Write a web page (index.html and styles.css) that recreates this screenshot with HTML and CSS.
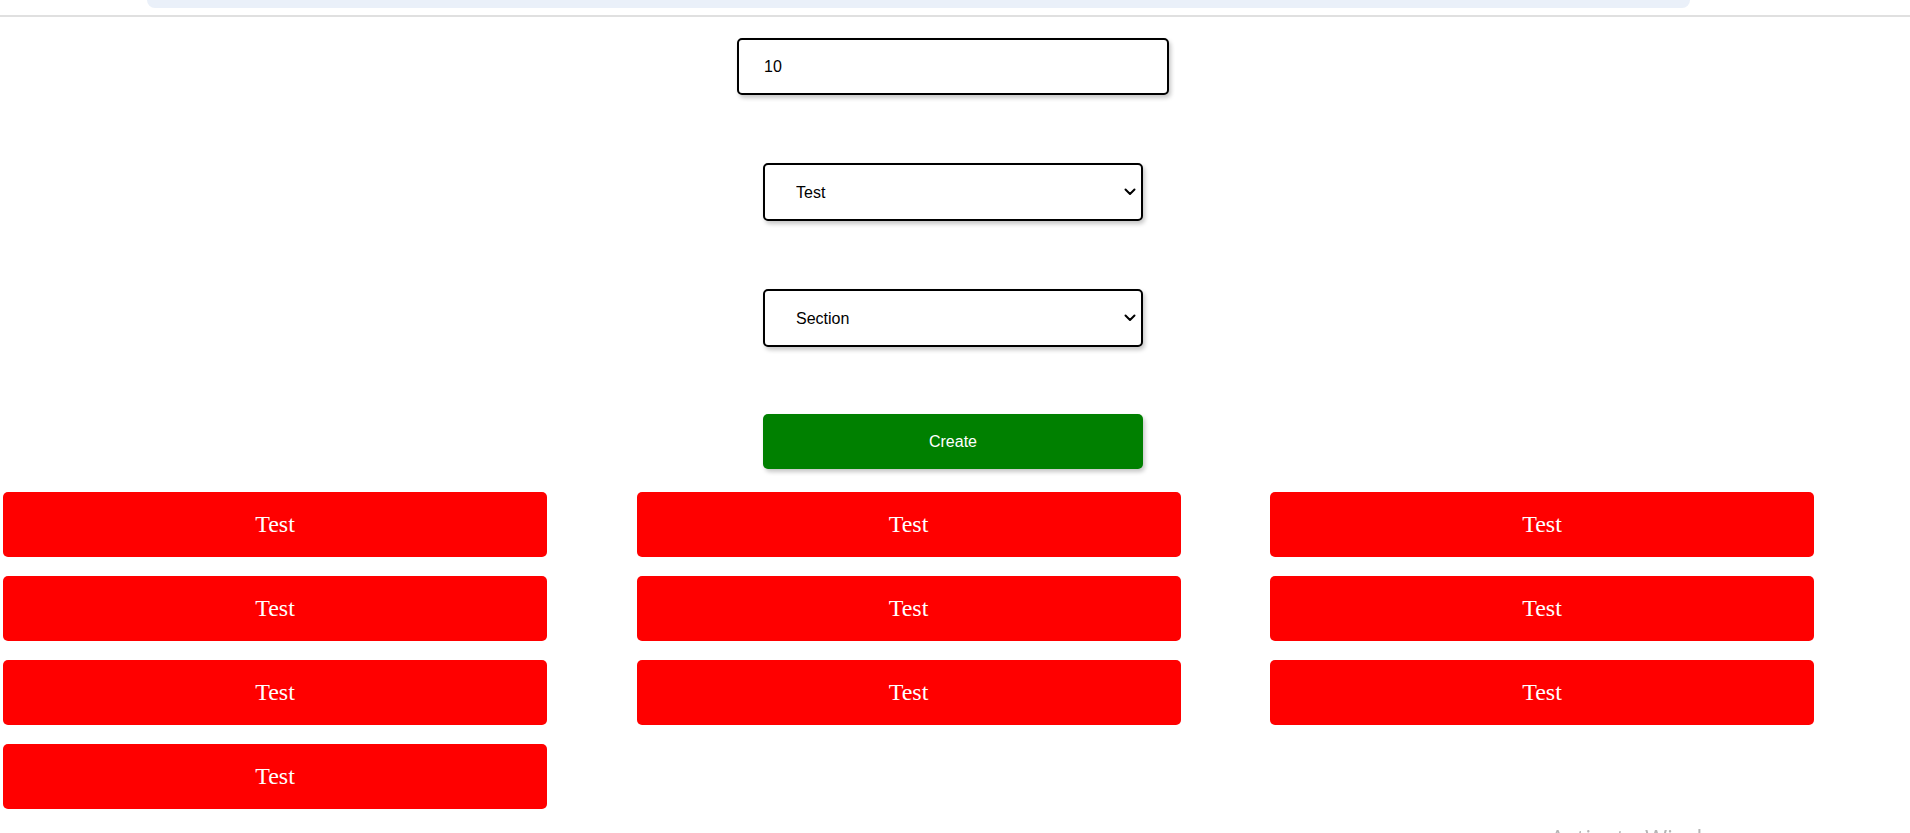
FILE: index.html
```html
<!DOCTYPE html>
<html lang="en">
<head>
<meta charset="utf-8">
<title>Create</title>
<link rel="stylesheet" href="styles.css">
</head>
<body>
<header class="topbar">
  <div class="searchpill"></div>
</header>
<main class="page">
  <form class="form">
    <input class="field" type="text" value="10">
    <div class="select-wrap">
      <select class="select">
        <option>Test</option>
      </select>
      <svg class="chev" width="12" height="8" viewBox="0 0 12 8"><path d="M1.5 1.5 L6 6 L10.5 1.5" fill="none" stroke="#000" stroke-width="2" stroke-linecap="round" stroke-linejoin="round"/></svg>
    </div>
    <div class="select-wrap">
      <select class="select">
        <option>Section</option>
      </select>
      <svg class="chev" width="12" height="8" viewBox="0 0 12 8"><path d="M1.5 1.5 L6 6 L10.5 1.5" fill="none" stroke="#000" stroke-width="2" stroke-linecap="round" stroke-linejoin="round"/></svg>
    </div>
    <button class="create" type="button">Create</button>
  </form>
  <section class="grid">
    <div class="card">Test</div>
    <div class="card">Test</div>
    <div class="card">Test</div>
    <div class="card">Test</div>
    <div class="card">Test</div>
    <div class="card">Test</div>
    <div class="card">Test</div>
    <div class="card">Test</div>
    <div class="card">Test</div>
    <div class="card">Test</div>
  </section>
</main>
<div class="watermark">Activate Windows</div>
</body>
</html>
```
FILE: styles.css
```css
* { box-sizing: border-box; }

html, body {
  margin: 0;
  padding: 0;
  background: #ffffff;
  overflow: hidden;
}

body {
  font-family: "Liberation Serif", "Times New Roman", serif;
}

.topbar {
  height: 17px;
  border-bottom: 2px solid #e0e0e0;
}

.searchpill {
  margin-left: 147px;
  width: 1543px;
  height: 8px;
  background: #eaf0f9;
  border-radius: 0 0 12px 12px;
}

.page {
  display: flex;
  flex-direction: column;
}

.form {
  display: flex;
  flex-direction: column;
  align-items: center;
  gap: 68px;
  margin: 21px 0 0 0;
  padding-right: 4px;
}

.field {
  width: 432px;
  height: 57px;
  border: 2px solid #000;
  border-radius: 5px;
  padding: 0 0 0 25px;
  font-family: "Liberation Sans", Arial, sans-serif;
  font-size: 16px;
  color: #000;
  background: #fff;
  box-shadow: 2px 3px 4px rgba(0, 0, 0, 0.22);
  outline: none;
}

.select-wrap {
  position: relative;
  width: 380px;
  height: 58px;
}

.select {
  appearance: none;
  -webkit-appearance: none;
  width: 100%;
  height: 100%;
  border: 2px solid #000;
  border-radius: 5px;
  padding: 0 30px 0 31px;
  font-family: "Liberation Sans", Arial, sans-serif;
  font-size: 16px;
  color: #000;
  background: #fff;
  box-shadow: 2px 3px 4px rgba(0, 0, 0, 0.22);
  outline: none;
}

.chev {
  position: absolute;
  right: 7px;
  top: 25px;
  pointer-events: none;
}

.create {
  width: 380px;
  height: 55px;
  margin-top: -1px;
  border: none;
  border-radius: 5px;
  background: #008000;
  color: #fff;
  font-family: "Liberation Sans", Arial, sans-serif;
  font-size: 16px;
  box-shadow: 2px 3px 4px rgba(0, 0, 0, 0.22);
}

.grid {
  display: grid;
  grid-template-columns: repeat(3, 544px);
  column-gap: 89.5px;
  row-gap: 19px;
  margin-top: 23px;
  padding-left: 3px;
}

.card {
  height: 65px;
  background: #ff0000;
  border-radius: 5px;
  color: #fff;
  font-family: "Liberation Serif", "Times New Roman", serif;
  font-size: 24px;
  display: flex;
  align-items: center;
  justify-content: center;
}

.watermark {
  position: fixed;
  left: 1550px;
  top: 821px;
  font-family: "Open Sans", "Liberation Sans", sans-serif;
  font-size: 24px;
  color: rgba(150, 150, 150, 0.7);
  white-space: nowrap;
}
```
